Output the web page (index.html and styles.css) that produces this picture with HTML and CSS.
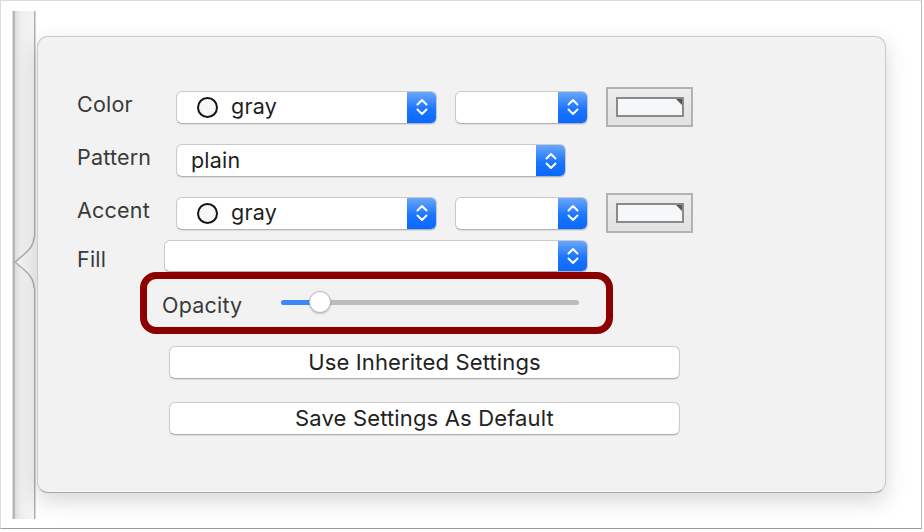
FILE: index.html
```html
<!DOCTYPE html>
<html>
<head>
<meta charset="utf-8">
<link rel="stylesheet" href="styles.css">
</head>
<body>
<div class="frame">
  <svg class="gutter" width="36" height="508" viewBox="0 0 36 508">
    <defs>
      <linearGradient id="band" x1="0" y1="0" x2="1" y2="0">
        <stop offset="0" stop-color="#dedede"/>
        <stop offset="0.35" stop-color="#efefef"/>
        <stop offset="1" stop-color="#f4f4f4"/>
      </linearGradient>
    </defs>
    <rect x="11.5" y="0" width="2.5" height="508" fill="#b6b6b6"/>
    <rect x="14" y="0" width="19" height="508" fill="url(#band)"/>
    <rect x="33" y="0" width="1.5" height="508" fill="#b0b0b0"/>
    <path d="M33,226 C33,236 26,241 14,251 C26,261 33,266 33,277 L36,277 L36,226 Z" fill="#f2f2f2"/>
    <path d="M33,226 C33,236 26,241 14,251 C26,261 33,266 33,277" fill="none" stroke="#adadad" stroke-width="1.5"/>
  </svg>
  <div class="panel">
    <div class="row row-color">
      <span class="label">Color</span>
      <div class="popup popup-wide">
        <span class="swatch"></span><span class="ptext">gray</span>
        <span class="stepper"><svg width="12" height="20" viewBox="0 0 12 20"><polyline points="1.5,7.5 6,3 10.5,7.5"/><polyline points="1.5,12.5 6,17 10.5,12.5"/></svg></span>
      </div>
      <div class="popup popup-small">
        <span class="ptext"></span>
        <span class="stepper"><svg width="12" height="20" viewBox="0 0 12 20"><polyline points="1.5,7.5 6,3 10.5,7.5"/><polyline points="1.5,12.5 6,17 10.5,12.5"/></svg></span>
      </div>
      <div class="well"><div class="well-inner"></div></div>
    </div>
    <div class="row row-pattern">
      <span class="label">Pattern</span>
      <div class="popup popup-pattern">
        <span class="ptext ptext-plain">plain</span>
        <span class="stepper"><svg width="12" height="20" viewBox="0 0 12 20"><polyline points="1.5,7.5 6,3 10.5,7.5"/><polyline points="1.5,12.5 6,17 10.5,12.5"/></svg></span>
      </div>
    </div>
    <div class="row row-accent">
      <span class="label">Accent</span>
      <div class="popup popup-wide">
        <span class="swatch"></span><span class="ptext">gray</span>
        <span class="stepper"><svg width="12" height="20" viewBox="0 0 12 20"><polyline points="1.5,7.5 6,3 10.5,7.5"/><polyline points="1.5,12.5 6,17 10.5,12.5"/></svg></span>
      </div>
      <div class="popup popup-small">
        <span class="ptext"></span>
        <span class="stepper"><svg width="12" height="20" viewBox="0 0 12 20"><polyline points="1.5,7.5 6,3 10.5,7.5"/><polyline points="1.5,12.5 6,17 10.5,12.5"/></svg></span>
      </div>
      <div class="well"><div class="well-inner"></div></div>
    </div>
    <div class="row row-fill">
      <span class="label label-fill">Fill</span>
      <div class="popup popup-fill">
        <span class="ptext"></span>
        <span class="stepper"><svg width="12" height="20" viewBox="0 0 12 20"><polyline points="1.5,7.5 6,3 10.5,7.5"/><polyline points="1.5,12.5 6,17 10.5,12.5"/></svg></span>
      </div>
    </div>
    <div class="highlight">
      <span class="op-label">Opacity</span>
      <div class="slider">
        <div class="track"></div>
        <div class="thumb"></div>
      </div>
    </div>
    <div class="button button-first">Use Inherited Settings</div>
    <div class="button button-second">Save Settings As Default</div>
  </div>
</div>
</body>
</html>
```

FILE: styles.css
```css
html, body {
  margin: 0;
  padding: 0;
  background: #ffffff;
}
body {
  width: 924px;
  height: 532px;
  overflow: hidden;
  font-family: "Inter", "Liberation Sans", sans-serif;
}
.frame {
  width: 920px;
  height: 527px;
  border: 1px solid #dcdcdc;
  border-right-color: #b8b8b8;
  border-bottom-color: #9c9c9c;
  display: flex;
  align-items: flex-start;
  background: #ffffff;
}
.gutter {
  display: block;
  margin-top: 10px;
  flex: none;
}
.panel {
  box-sizing: border-box;
  width: 849px;
  height: 457px;
  margin-top: 35px;
  background: #f2f2f2;
  border: 1px solid #cbcbcb;
  border-bottom-color: #ababab;
  border-radius: 11px;
  box-shadow: 0 8px 22px rgba(0, 0, 0, 0.16);
  display: flex;
  flex-direction: column;
  flex: none;
}
.row {
  display: flex;
  align-items: center;
  padding-left: 39px;
}
.row-color { height: 40px; margin-top: 50px; }
.row-pattern { height: 33px; margin-top: 17px; }
.row-accent { height: 40px; margin-top: 16px; }
.row-fill { height: 32px; margin-top: 7px; }
.label {
  width: 99px;
  flex: none;
  font-size: 21.5px;
  letter-spacing: 0.2px;
  color: #3a3a3a;
  padding-bottom: 7px;
}
.label-fill {
  width: 87px;
  padding-bottom: 0;
  padding-top: 6px;
}
.popup {
  box-sizing: border-box;
  height: 33px;
  background: #ffffff;
  border: 1px solid #c9c9c9;
  border-bottom-color: #b3b3b3;
  border-radius: 6px;
  box-shadow: 0 1px 1px rgba(0, 0, 0, 0.08);
  display: flex;
  align-items: center;
  flex: none;
  overflow: hidden;
}
.popup-wide { width: 261px; }
.popup-small { width: 133px; margin-left: 18px; }
.popup-pattern { width: 390px; }
.popup-fill { width: 424px; height: 32px; }
.swatch {
  box-sizing: border-box;
  width: 21px;
  height: 21px;
  border: 2px solid #141414;
  border-radius: 50%;
  background: #f6f7f9;
  margin-left: 20px;
  flex: none;
}
.ptext {
  flex: 1;
  font-size: 21.5px;
  letter-spacing: 0.2px;
  color: #1f1f1f;
  margin-left: 13px;
  padding-bottom: 2px;
}
.ptext-plain { margin-left: 14px; }
.stepper {
  width: 29px;
  align-self: stretch;
  background: linear-gradient(to bottom, #6aa7fb, #1b75ff 55%, #0a68fd);
  display: flex;
  align-items: center;
  justify-content: center;
  flex: none;
}
.stepper svg {
  display: block;
}
.stepper polyline {
  fill: none;
  stroke: #ffffff;
  stroke-width: 2;
  stroke-linecap: round;
  stroke-linejoin: round;
}
.well {
  box-sizing: border-box;
  width: 87px;
  height: 40px;
  margin-left: 18px;
  border: 2px solid #b2b2b2;
  background: linear-gradient(to bottom, #ececec, #e2e2e2);
  display: flex;
  align-items: center;
  justify-content: center;
  flex: none;
}
.well-inner {
  box-sizing: border-box;
  position: relative;
  width: 68px;
  height: 20px;
  border: 2px solid #8a8a8a;
  background: #f6f7f9;
}
.well-inner::after {
  content: "";
  position: absolute;
  top: 0;
  right: 0;
  width: 0;
  height: 0;
  border-top: 6px solid #555555;
  border-left: 6px solid transparent;
}
.highlight {
  box-sizing: border-box;
  width: 473px;
  height: 62px;
  margin-left: 102px;
  border: 7px solid #8c0000;
  border-radius: 16px;
  display: flex;
  align-items: center;
  padding-left: 15px;
}
.op-label {
  width: 119px;
  flex: none;
  font-size: 21.5px;
  letter-spacing: 0.2px;
  color: #3a3a3a;
  padding-top: 4px;
}
.slider {
  position: relative;
  width: 298px;
  height: 22px;
  display: flex;
  align-items: center;
  margin-bottom: 2px;
}
.track {
  width: 100%;
  height: 5px;
  border-radius: 3px;
  background: linear-gradient(to right, #3b87f7 0, #3b87f7 32px, #bcbcbc 32px);
}
.thumb {
  position: absolute;
  left: 28px;
  top: 0;
  box-sizing: border-box;
  width: 22px;
  height: 22px;
  border-radius: 50%;
  background: #ffffff;
  border: 1px solid #b8b8b8;
  box-shadow: 0 1px 2px rgba(0, 0, 0, 0.2);
}
.button {
  box-sizing: border-box;
  width: 511px;
  height: 33px;
  margin-left: 131px;
  background: #ffffff;
  border: 1px solid #cacaca;
  border-bottom-color: #afafaf;
  border-radius: 6px;
  box-shadow: 0 1px 1px rgba(0, 0, 0, 0.08);
  display: flex;
  align-items: center;
  justify-content: center;
  font-size: 22px;
  letter-spacing: 0.15px;
  color: #222222;
  padding-bottom: 1px;
}
.button-first { margin-top: 12px; }
.button-second { margin-top: 23px; }
```
